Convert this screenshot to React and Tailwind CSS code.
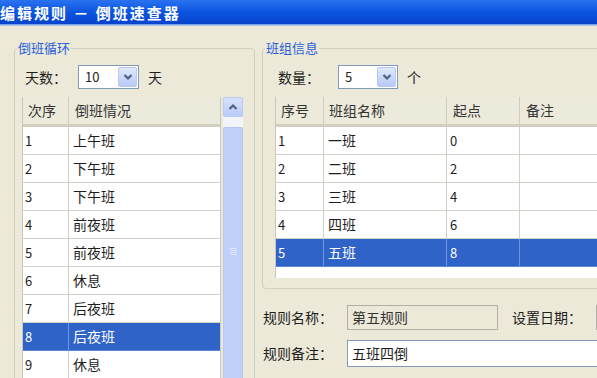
import React from "react";

const leftRows = [
  ["1", "上午班"],
  ["2", "下午班"],
  ["3", "下午班"],
  ["4", "前夜班"],
  ["5", "前夜班"],
  ["6", "休息"],
  ["7", "后夜班"],
  ["8", "后夜班"],
  ["9", "休息"],
];

const rightRows = [
  ["1", "一班", "0"],
  ["2", "二班", "2"],
  ["3", "三班", "4"],
  ["4", "四班", "6"],
  ["5", "五班", "8"],
];

function ChevronDown() {
  return (
    <svg width="10" height="8" viewBox="0 0 10 8">
      <path d="M1.5 2 L5 5.5 L8.5 2" fill="none" stroke="#4d6185" strokeWidth="2.2" />
    </svg>
  );
}

function ChevronUp() {
  return (
    <svg width="10" height="8" viewBox="0 0 10 8">
      <path d="M1.5 6 L5 2.5 L8.5 6" fill="none" stroke="#4d6185" strokeWidth="2.2" />
    </svg>
  );
}

function Combo({ value, width }) {
  return (
    <div className={`flex h-[24px] items-center border border-[#7f9db9] bg-white ${width}`}>
      <span className="flex-1 pl-[6px] text-[13px] text-[#222]">{value}</span>
      <div className="mr-[1px] flex h-[20px] w-[19px] items-center justify-center rounded-[2px] border border-[#b9c9ef] bg-gradient-to-b from-[#dfe8fd] to-[#b7c9f5]">
        <ChevronDown />
      </div>
    </div>
  );
}

function GroupBox({ label, className, children }) {
  return (
    <div className={`relative rounded-[4px] border border-[#d0d0bf] ${className}`}>
      <span className="absolute left-[2px] top-[-9px] bg-[#ece9d8] px-[1px] text-[13px] leading-[16px] text-[#2b5fd8]">
        {label}
      </span>
      {children}
    </div>
  );
}

export default function App() {
  return (
    <div className="flex h-[378px] w-[597px] flex-col overflow-hidden bg-[#ece9d8] font-['Noto_Sans_CJK_SC',sans-serif] text-[14px] text-[#1e1e1e]">
      {/* title bar */}
      <div className="flex h-[24px] shrink-0 items-center bg-gradient-to-b from-[#2a72f0] via-[#0a55e0] to-[#0842cc]">
        <span className="text-[15px] font-bold leading-none tracking-[2px] text-white">
          编辑规则 － 倒班速查器
        </span>
      </div>
      <div className="h-[2px] shrink-0 bg-gradient-to-b from-[#5f8fe8] to-[#c9d3e6]" />

      <div className="flex flex-1 items-start pt-[22px]">
        {/* left group */}
        <GroupBox label="倒班循环" className="ml-[14px] h-[400px] w-[241px] shrink-0">
          <div className="flex items-center pl-[10px] pt-[16px]">
            <span>天数：</span>
            <div className="ml-[11px]">
              <Combo value="10" width="w-[61px]" />
            </div>
            <span className="ml-[9px]">天</span>
          </div>
          <div className="mt-[8px] flex pl-[7px]">
            <div className="w-[199px] border-x border-[#c9c7ba] bg-white">
              <div className="flex h-[30px] border-b-[3px] border-[#d3cfbf] bg-[#ebeadb] text-[#333]">
                <div className="flex w-[46px] items-center border-r border-[#cfcdbd] pl-[5px]">次序</div>
                <div className="flex flex-1 items-center pl-[6px]">倒班情况</div>
              </div>
              {leftRows.map(([n, t], i) => {
                const sel = i === 7;
                return (
                  <div
                    key={i}
                    className={`flex h-[28px] border-b ${sel ? "border-[#5b86d6] bg-[#2f63c8] text-white" : "border-[#d4d2c8]"}`}
                  >
                    <div className={`flex w-[46px] items-center border-r pl-[2px] text-[13px] ${sel ? "border-[#6f96dd]" : "border-[#d4d2c8]"}`}>
                      {n}
                    </div>
                    <div className="flex flex-1 items-center pl-[4px]">{t}</div>
                  </div>
                );
              })}
            </div>
            {/* scrollbar */}
            <div className="ml-[2px] flex w-[20px] flex-col">
              <div className="flex h-[20px] items-center justify-center rounded-[2px] border border-[#bccbf2] bg-gradient-to-b from-[#d6e1fd] to-[#b9cbf7]">
                <ChevronUp />
              </div>
              <div className="h-[10px] bg-[#f3f4fb]" />
              <div className="relative h-[260px] rounded-[2px] border border-[#b5c8f3] bg-[#bfd1fb]">
                <div className="absolute left-[6px] top-[120px] flex w-[7px] flex-col gap-[1px]">
                  <div className="h-[1px] bg-[#dfe7fd]" />
                  <div className="h-[1px] bg-[#dfe7fd]" />
                  <div className="h-[1px] bg-[#dfe7fd]" />
                  <div className="h-[1px] bg-[#dfe7fd]" />
                </div>
              </div>
            </div>
          </div>
        </GroupBox>

        {/* right column */}
        <div className="ml-[7px] flex w-[380px] shrink-0 flex-col">
          <GroupBox label="班组信息" className="h-[241px]">
            <div className="flex items-center pl-[15px] pt-[16px]">
              <span>数量：</span>
              <div className="ml-[18px]">
                <Combo value="5" width="w-[60px]" />
              </div>
              <span className="ml-[9px]">个</span>
            </div>
            <div className="ml-[12px] mt-[8px] h-[181px] border-l border-[#c9c7ba] bg-white">
              <div className="flex h-[30px] border-b-[3px] border-[#d3cfbf] bg-[#ebeadb] text-[#333]">
                <div className="flex w-[48px] items-center border-r border-[#cfcdbd] pl-[5px]">序号</div>
                <div className="flex w-[123px] items-center border-r border-[#cfcdbd] pl-[5px]">班组名称</div>
                <div className="flex w-[73px] items-center border-r border-[#cfcdbd] pl-[6px]">起点</div>
                <div className="flex flex-1 items-center pl-[6px]">备注</div>
              </div>
              {rightRows.map(([n, name, s], i) => {
                const sel = i === 4;
                const bc = sel ? "border-[#6f96dd]" : "border-[#d4d2c8]";
                return (
                  <div
                    key={i}
                    className={`flex h-[28px] border-b ${sel ? "border-[#5b86d6] bg-[#2f63c8] text-white" : "border-[#d4d2c8]"}`}
                  >
                    <div className={`flex w-[48px] items-center border-r pl-[2px] text-[13px] ${bc}`}>{n}</div>
                    <div className={`flex w-[123px] items-center border-r pl-[4px] ${bc}`}>{name}</div>
                    <div className={`flex w-[73px] items-center border-r pl-[3px] text-[13px] ${bc}`}>{s}</div>
                    <div className="flex-1" />
                  </div>
                );
              })}
            </div>
          </GroupBox>

          <div className="mt-[16px] flex items-center">
            <span className="ml-[1px] w-[84px]">规则名称：</span>
            <div className="flex h-[25px] w-[151px] items-center border border-[#b2b0a3] bg-[#ece9d8] pl-[4px] text-[#333]">
              第五规则
            </div>
            <span className="ml-[14px]">设置日期：</span>
            <div className="ml-[14px] h-[25px] w-[40px] border border-[#b2b0a3] bg-[#f4f3ee]" />
          </div>
          <div className="mt-[10px] flex items-center">
            <span className="ml-[1px] w-[84px]">规则备注：</span>
            <div className="flex h-[27px] flex-1 items-center border border-[#7f9db9] bg-white pl-[4px]">
              五班四倒
            </div>
          </div>
        </div>
      </div>
    </div>
  );
}
